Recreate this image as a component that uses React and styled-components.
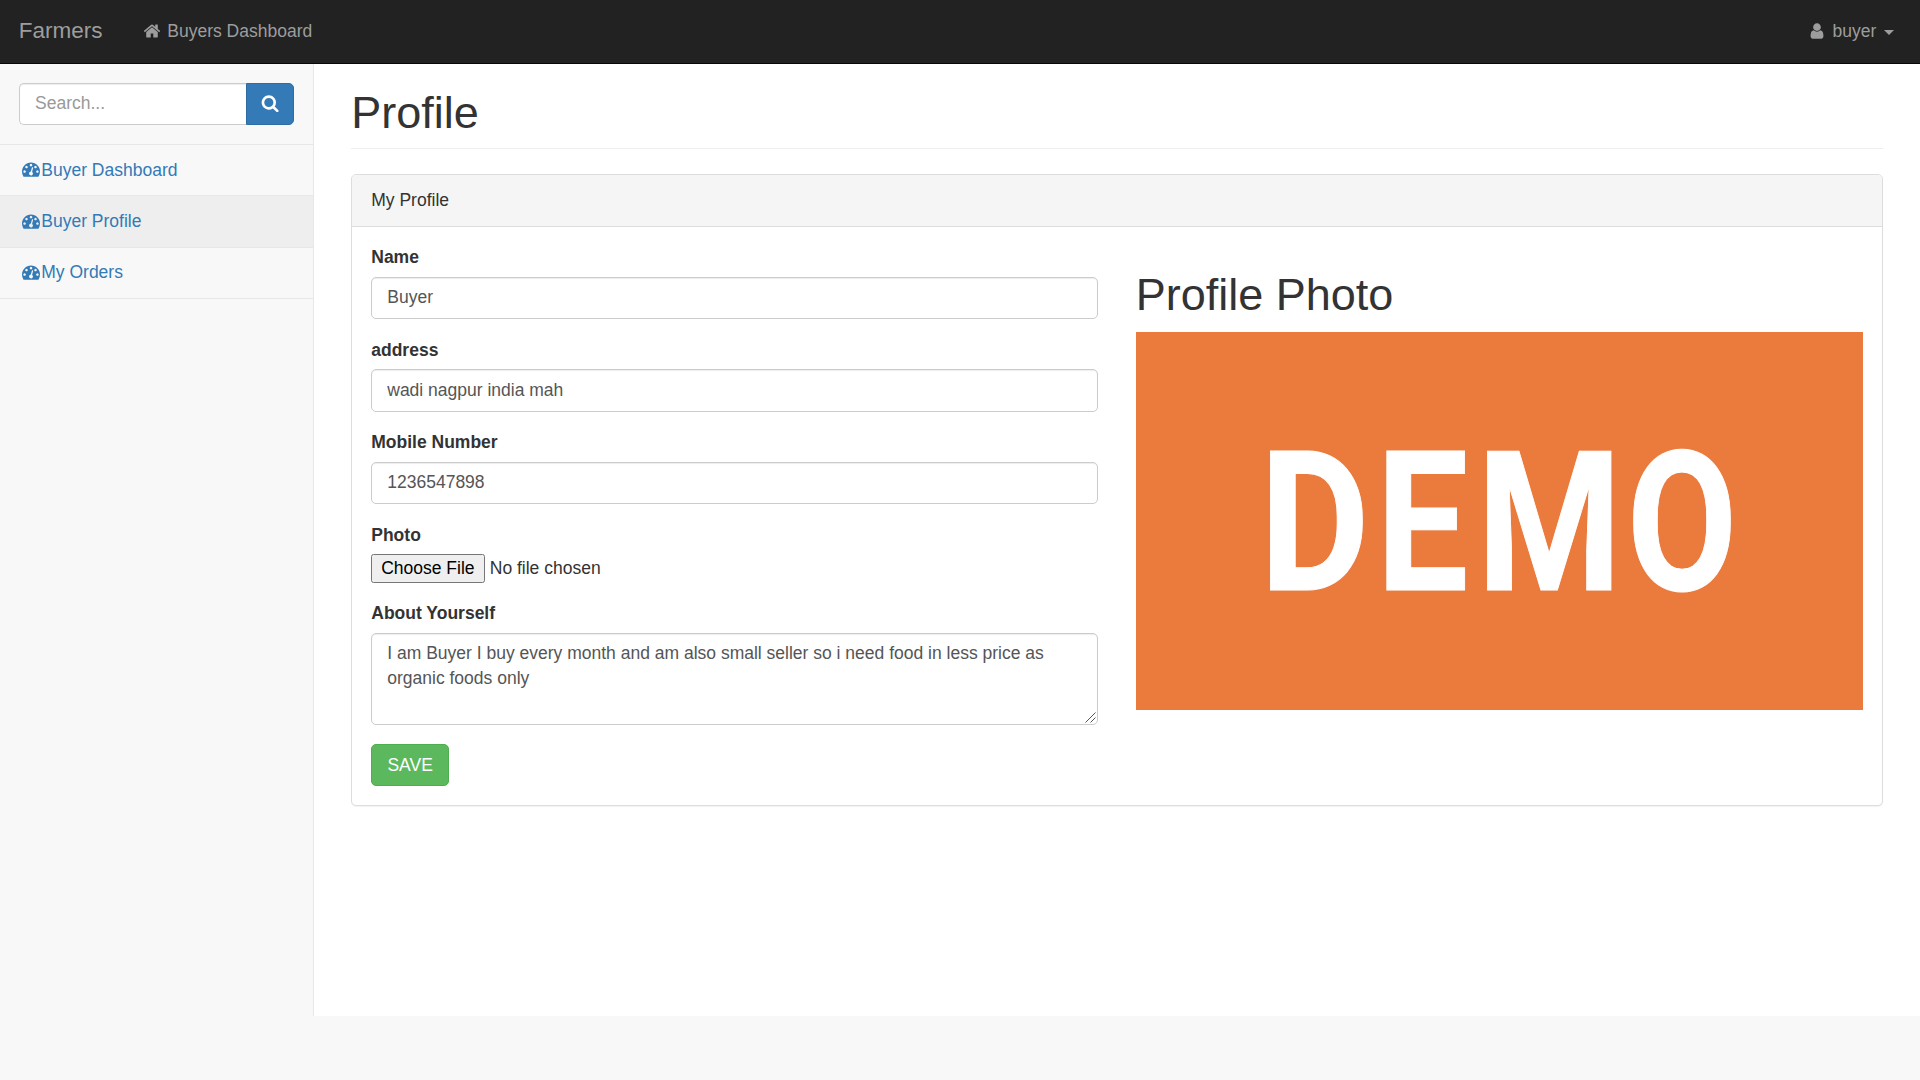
import React from "react";
import styled, { createGlobalStyle } from "styled-components";

const GlobalStyle = createGlobalStyle`
  *, *::before, *::after { box-sizing: border-box; }
  body {
    margin: 0;
    background: #f8f8f8;
    color: #333;
    font-family: "Liberation Sans", Arial, Helvetica, sans-serif;
    font-size: 17.5px;
    line-height: 25px;
  }
  input, textarea, button { font-family: inherit; font-size: inherit; line-height: inherit; margin: 0; }
  a { text-decoration: none; }
`;

const Page = styled.div`
  min-height: 1080px;
`;

const Navbar = styled.header`
  display: flex;
  align-items: center;
  height: 64px;
  padding: 0 26.25px 1px 18.75px;
  background: #222;
  border-bottom: 1px solid #080808;
`;

const Brand = styled.a`
  color: #9d9d9d;
  font-size: 22.5px;
  width: 121.75px;
  padding-bottom: 1.5px;
`;

const NavLink = styled.a`
  display: flex;
  align-items: center;
  color: #9d9d9d;
  margin-left: ${(p) => (p.$end ? "auto" : "0")};
`;

const NavIcon = styled.span`
  display: flex;
  justify-content: center;
  width: 22.5px;
  margin-right: 4.25px;
`;

const Caret = styled.span`
  margin: 2px 0 0 7.5px;
  border-top: 5px solid #9d9d9d;
  border-left: 5px solid transparent;
  border-right: 5px solid transparent;
`;

const Glyph = styled.svg`
  display: block;
  width: ${(p) => p.$size || 17.5}px;
  height: ${(p) => p.$size || 17.5}px;
  fill: currentColor;
  flex: none;
`;

const Body = styled.div`
  display: flex;
  align-items: flex-start;
`;

const Sidebar = styled.nav`
  width: 313px;
  flex: none;
`;

const SearchRow = styled.div`
  display: flex;
  padding: 18.75px;
  height: 81px;
  border-bottom: 1px solid #e7e7e7;
`;

const SearchInput = styled.input`
  flex: 1;
  min-width: 0;
  height: 42.5px;
  padding: 6.5px 15px 8.5px 15.25px;
  background: #fff;
  border: 1px solid #ccc;
  border-right: 0;
  border-radius: 5px 0 0 5px;
  box-shadow: inset 0 1px 1px rgba(0, 0, 0, 0.075);
  outline: 0;
  &::placeholder { color: #999; opacity: 1; }
`;

const SearchButton = styled.button`
  display: flex;
  align-items: center;
  justify-content: center;
  width: 48.5px;
  height: 42.5px;
  padding: 0 0 2.5px 0.5px;
  color: #fff;
  background: #337ab7;
  border: 1px solid #2e6da4;
  border-radius: 0 5px 5px 0;
`;

const MenuLink = styled.a`
  display: flex;
  align-items: center;
  height: 51.3px;
  padding: 0 18.75px 0 21.5px;
  gap: 1.75px;
  color: #337ab7;
  background: ${(p) => (p.$active ? "#eee" : "transparent")};
  border-bottom: 1px solid #e7e7e7;
  svg { margin-bottom: 1.5px; }
`;

const Main = styled.main`
  flex: 1;
  min-width: 0;
  height: 952px;
  padding: 24.25px 37.5px 0 37px;
  background: #fff;
  border-left: 1px solid #e7e7e7;
`;

const PageTitle = styled.h1`
  margin: 0 0 25px;
  padding: 0 0 10.25px 0.25px;
  border-bottom: 1px solid #eee;
  font-size: 45px;
  font-weight: 400;
  line-height: 49.5px;
`;

const Panel = styled.section`
  background: #fff;
  border: 1px solid #ddd;
  border-radius: 5px;
  box-shadow: 0 1px 1px rgba(0, 0, 0, 0.05);
`;

const PanelHeading = styled.div`
  height: 52px;
  padding: 12.5px 19.25px;
  background: #f5f5f5;
  border-bottom: 1px solid #ddd;
  border-radius: 4px 4px 0 0;
`;

const PanelBody = styled.div`
  display: grid;
  grid-template-columns: 1fr 1fr;
  gap: 37.5px;
  padding: 18.25px 18.75px 18.75px;
`;

const Field = styled.div`
  margin-bottom: 18.75px;
`;

const Label = styled.label`
  display: block;
  margin-bottom: 6.25px;
  padding-left: 0.5px;
  font-weight: 700;
`;

const TextInput = styled.input`
  display: block;
  width: 100%;
  height: 42.5px;
  padding: 7.25px 15px 7.75px 15.5px;
  color: #555;
  background: #fff;
  border: 1px solid #ccc;
  border-radius: 5px;
  box-shadow: inset 0 1px 1px rgba(0, 0, 0, 0.075);
  outline: 0;
`;

const TextAreaBox = styled.div`
  position: relative;
`;

const TextArea = styled.textarea`
  display: block;
  width: 100%;
  height: 92.5px;
  padding: 7px 15px 7.5px 15.5px;
  color: #555;
  background: #fff;
  border: 1px solid #ccc;
  border-radius: 5px;
  box-shadow: inset 0 1px 1px rgba(0, 0, 0, 0.075);
  resize: none;
  overflow: auto;
  outline: 0;
`;

const ResizeGrip = styled.svg`
  position: absolute;
  right: 2px;
  bottom: 2px;
  width: 11px;
  height: 11px;
  stroke: #555;
  stroke-width: 1;
  fill: none;
`;

const FileInput = styled.input`
  display: block;
  height: 28.5px;
  line-height: 20px;
  &::file-selector-button {
    height: 28.5px;
    width: 114px;
    margin: 0 5px 0 0;
    padding: 1px 0 2px 0.25px;
    font: inherit;
    color: #000;
    background: #efefef;
    border: 1px solid #767676;
    border-radius: 2.5px;
  }
`;

const SaveButton = styled.button`
  display: block;
  height: 42.5px;
  width: 78px;
  padding: 0 0 0 0.75px;
  color: #fff;
  background: #5cb85c;
  border: 1px solid #4cae4c;
  border-radius: 5px;
`;

const PhotoTitle = styled.h1`
  margin: 25px 0 12.5px;
  padding-left: 0.25px;
  font-size: 45px;
  font-weight: 400;
  line-height: 49.5px;
`;

const Photo = styled.svg`
  display: block;
  width: 100%;
  height: 378px;
  background: #eb7a3d;
`;

const PhotoLetter = styled.text`
  fill: #fff;
  stroke: #fff;
  stroke-width: 1px;
  font-family: Roboto, "Liberation Sans", sans-serif;
  font-weight: 700;
  font-size: 195px;
`;

const ICONS = {
  home: "M1472 992v480q0 26-19 45t-45 19h-384v-384h-256v384h-384q-26 0-45-19t-19-45v-480q0-1 .5-3t.5-3l575-474 575 474q1 2 1 6zm223-69l-62 74q-8 9-21 11h-3q-13 0-21-7l-692-577-692 577q-12 8-24 7-13-2-21-11l-62-74q-8-10-7-23.5t11-21.5l719-599q32-26 76-26t76 26l244 204v-195q0-14 9-23t23-9h192q14 0 23 9t9 23v408l219 182q10 8 11 21.5t-7 23.5z",
  search: "M1216 832q0-185-131.500-316.500t-316.500-131.500-316.500 131.500-131.500 316.500 131.500 316.500 316.500 131.500 316.500-131.500 131.500-316.500zm512 832q0 52-38 90t-90 38q-54 0-90-38l-343-342q-179 124-399 124-143 0-273.500-55.500t-225-150-150-225-55.500-273.500 55.500-273.500 150-225 225-150 273.500-55.500 273.500 55.500 225 150 150 225 55.500 273.500q0 220-124 399l343 343q37 37 37 90z",
  gauge: "M384 1152q0-53-37.500-90.500t-90.500-37.500-90.500 37.500-37.500 90.500 37.500 90.500 90.500 37.500 90.500-37.500 37.500-90.500zm192-448q0-53-37.500-90.500t-90.500-37.500-90.500 37.500-37.500 90.500 37.500 90.500 90.500 37.500 90.500-37.500 37.500-90.500zm428 481l101-382q6-26-7.500-48.500t-38.500-29.500-48 6.500-30 39.500l-101 382q-60 5-107 43.500t-63 98.500q-20 77 20 146t117 89 146-20 89-117q16-60-6-117t-72-91zm660-33q0-53-37.500-90.500t-90.500-37.500-90.500 37.500-37.500 90.500 37.500 90.500 90.500 37.500 90.500-37.500 37.500-90.500zm-640-640q0-53-37.500-90.500t-90.500-37.500-90.500 37.500-37.500 90.500 37.500 90.500 90.500 37.500 90.500-37.500 37.500-90.500zm448 192q0-53-37.500-90.500t-90.500-37.500-90.500 37.500-37.500 90.500 37.500 90.500 90.500 37.500 90.500-37.500 37.500-90.500zm320 448q0 261-141 483-19 29-54 29h-1402q-35 0-54-29-141-221-141-483 0-182 71-348t191-286 286-191 348-71 348 71 286 191 191 286 71 348z",
  user: "M1536 1399q0 109-62.500 187t-150.500 78h-854q-88 0-150.500-78t-62.500-187q0-85 8.500-160.500t31.500-152 58.500-131 94-89 134.500-34.500q131 128 313 128t313-128q76 0 134.500 34.500t94 89 58.500 131 31.500 152 8.500 160.500zm-256-887q0 159-112.500 271.500t-271.500 112.500-271.500-112.500-112.500-271.500 112.500-271.500 271.500-112.500 271.500 112.500 112.500 271.500z",
};

function Icon({ name, size }) {
  return (
    <Glyph viewBox="0 0 1792 1792" $size={size} aria-hidden="true">
      <path d={ICONS[name]} />
    </Glyph>
  );
}

const MENU = [
  { label: "Buyer Dashboard" },
  { label: "Buyer Profile", active: true },
  { label: "My Orders" },
];

const FIELDS = [
  { label: "Name", value: "Buyer" },
  { label: "address", value: "wadi nagpur india mah" },
  { label: "Mobile Number", value: "1236547898" },
];

const LETTERS = [
  { char: "D", x: 123.6, scale: 0.865 },
  { char: "E", x: 240.4, scale: 0.836 },
  { char: "M", x: 341, scale: 0.846 },
  { char: "O", x: 490.8, scale: 0.818 },
];

export default function App() {
  return (
    <Page>
      <GlobalStyle />
      <Navbar>
        <Brand>Farmers</Brand>
        <NavLink>
          <NavIcon><Icon name="home" size={18} /></NavIcon>
          Buyers Dashboard
        </NavLink>
        <NavLink $end>
          <NavIcon><Icon name="user" size={18} /></NavIcon>
          buyer
          <Caret />
        </NavLink>
      </Navbar>
      <Body>
        <Sidebar>
          <SearchRow>
            <SearchInput placeholder="Search..." />
            <SearchButton type="button"><Icon name="search" size={18.25} /></SearchButton>
          </SearchRow>
          {MENU.map((item) => (
            <MenuLink key={item.label} $active={item.active}>
              <Icon name="gauge" size={18} />
              {item.label}
            </MenuLink>
          ))}
        </Sidebar>
        <Main>
          <PageTitle>Profile</PageTitle>
          <Panel>
            <PanelHeading>My Profile</PanelHeading>
            <PanelBody>
              <form>
                {FIELDS.map((field) => (
                  <Field key={field.label}>
                    <Label>{field.label}</Label>
                    <TextInput defaultValue={field.value} />
                  </Field>
                ))}
                <Field>
                  <Label>Photo</Label>
                  <FileInput type="file" />
                </Field>
                <Field>
                  <Label>About Yourself</Label>
                  <TextAreaBox>
                    <TextArea
                      spellCheck={false}
                      defaultValue="I am Buyer I buy every month and am also small seller so i need food in less price as organic foods only"
                    />
                    <ResizeGrip viewBox="0 0 11 11" aria-hidden="true">
                      <path d="M0.5 10.5L10.5 0.5M5.5 10.5L10.5 5.5" />
                    </ResizeGrip>
                  </TextAreaBox>
                </Field>
                <SaveButton type="button">SAVE</SaveButton>
              </form>
              <div>
                <PhotoTitle>Profile Photo</PhotoTitle>
                <Photo viewBox="0 0 727 378" preserveAspectRatio="none">
                  {LETTERS.map((l) => (
                    <PhotoLetter key={l.char} transform={`translate(${l.x} 258.4) scale(${l.scale} 1)`}>
                      {l.char}
                    </PhotoLetter>
                  ))}
                </Photo>
              </div>
            </PanelBody>
          </Panel>
        </Main>
      </Body>
    </Page>
  );
}
